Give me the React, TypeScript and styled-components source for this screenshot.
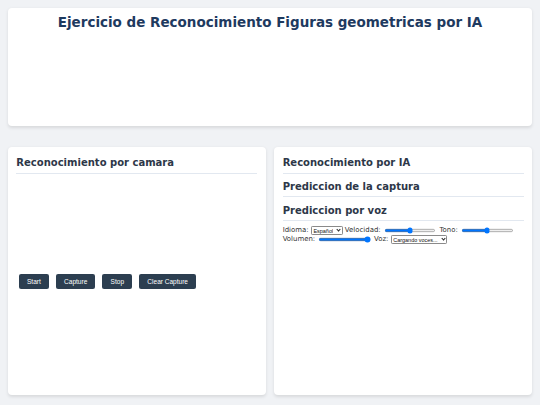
import React from 'react';
import styled, { createGlobalStyle } from 'styled-components';

// the page is laid out at 1320px wide and zoomed down to the 540px window
const GlobalStyle = createGlobalStyle`
  html, body {
    margin: 0;
    padding: 0;
    background-color: #f0f2f5;
  }
  body {
    font-family: "DejaVu Sans", Verdana, sans-serif;
    color: #333;
  }
  #root {
    zoom: 0.40909;
  }
`;

const Page = styled.div`
  padding: 20px;
  display: flex;
  flex-direction: column;
  gap: 51px;
`;

const Card = styled.section<{ $minHeight: number }>`
  background-color: #ffffff;
  border-radius: 10px;
  box-shadow: 0 4px 8px rgba(0, 0, 0, 0.1);
  padding: 26px 20px 20px;
  min-height: ${(p) => p.$minHeight}px;
  box-sizing: border-box;
`;

const HeaderCard = styled(Card)`
  padding: 15px 20px;
`;

const Title = styled.h1`
  margin: 0;
  text-align: center;
  font-size: 33px;
  font-weight: bold;
  color: #1e3a5f;
`;

const Row = styled.div`
  display: grid;
  grid-template-columns: 1fr 1fr;
  gap: 22px;
`;

const SectionTitle = styled.h2`
  margin: 0 0 19px 0;
  padding-bottom: 10px;
  border-bottom: 2px solid #e2e8f0;
  font-size: 24.5px;
  font-weight: bold;
  color: #2d3748;
`;

const VideoBox = styled.div`
  height: 226px;
`;

const ButtonBar = styled.div`
  display: flex;
  gap: 17px;
  padding-left: 6px;
`;

const ActionButton = styled.button`
  font-family: "Liberation Sans", Arial, sans-serif;
  font-size: 16px;
  color: #ffffff;
  background-color: #2c3e50;
  border: none;
  border-radius: 5px;
  padding: 10px 20px;
  cursor: pointer;
`;

const Controls = styled.div`
  font-size: 17px;
  line-height: 21px;
  color: #333;
  margin-top: -7px;
`;

const Slider = styled.input`
  vertical-align: middle;
  margin: 0 2px;
`;

const SelectWrap = styled.span`
  position: relative;
  display: inline-block;
  vertical-align: middle;

  &::after {
    content: '';
    position: absolute;
    right: 7px;
    top: 5px;
    width: 5px;
    height: 5px;
    border-right: 2px solid #222;
    border-bottom: 2px solid #222;
    transform: rotate(45deg);
    pointer-events: none;
  }
`;

const SmallSelect = styled.select`
  appearance: none;
  font-family: "Liberation Sans", Arial, sans-serif;
  font-size: 13.33px;
  color: #111;
  background-color: #ffffff;
  border: 1px solid #8a8a8a;
  border-radius: 3px;
  padding: 1px 20px 1px 4px;
  margin: 0;
`;

const botones = ['Start', 'Capture', 'Stop', 'Clear Capture'];

const App: React.FC = () => {
  return (
    <>
      <GlobalStyle />
      <Page>
        <HeaderCard $minHeight={288}>
          <Title>Ejercicio de Reconocimiento Figuras geometricas por IA</Title>
        </HeaderCard>
        <Row>
          <Card $minHeight={606}>
            <SectionTitle>Reconocimiento por camara</SectionTitle>
            <VideoBox />
            <ButtonBar>
              {botones.map((b) => (
                <ActionButton key={b}>{b}</ActionButton>
              ))}
            </ButtonBar>
          </Card>
          <Card $minHeight={606}>
            <SectionTitle>Reconocimiento por IA</SectionTitle>
            <SectionTitle>Prediccion de la captura</SectionTitle>
            <SectionTitle>Prediccion por voz</SectionTitle>
            <Controls>
              <label>Idioma:</label>{' '}
              <SelectWrap>
                <SmallSelect defaultValue="es">
                  <option value="es">Español</option>
                  <option value="en">English</option>
                </SmallSelect>
              </SelectWrap>{' '}
              <label>Velocidad:</label>{' '}
              <Slider type="range" min={0} max={2} step={0.1} defaultValue={1} />{' '}
              <label>Tono:</label>{' '}
              <Slider type="range" min={0} max={2} step={0.1} defaultValue={1} />{' '}
              <label>Volumen:</label>{' '}
              <Slider type="range" min={0} max={1} step={0.1} defaultValue={1} />{' '}
              <label>Voz:</label>{' '}
              <SelectWrap>
                <SmallSelect defaultValue="loading">
                  <option value="loading">Cargando voces...</option>
                </SmallSelect>
              </SelectWrap>
            </Controls>
          </Card>
        </Row>
      </Page>
    </>
  );
};

export default App;
